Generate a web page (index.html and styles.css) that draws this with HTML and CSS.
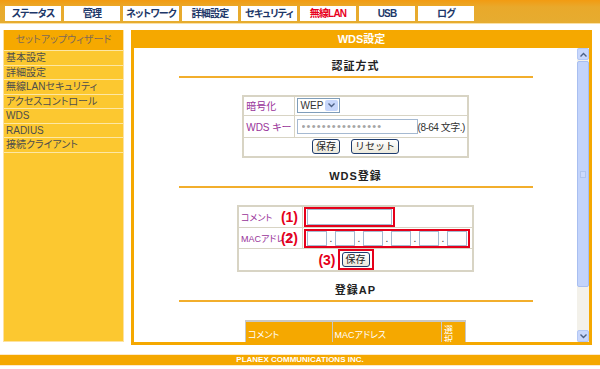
FILE: index.html
```html
<!DOCTYPE html>
<html lang="ja">
<head>
    <meta charset="UTF-8">
    <title>WDS設定</title>
    <link rel="stylesheet" href="styles.css">
</head>
<body>
    <div class="topbar">
        <ul class="tabs">
            <li>ステータス</li>
            <li>管理</li>
            <li>ネットワーク</li>
            <li>詳細設定</li>
            <li>セキュリティ</li>
            <li class="active">無線LAN</li>
            <li>USB</li>
            <li>ログ</li>
        </ul>
    </div>

    <div class="layout">
        <div class="sidebar">
            <div class="side-head">セットアップウィザード</div>
            <ul class="side-menu">
                <li>基本設定</li>
                <li>詳細設定</li>
                <li>無線LANセキュリティ</li>
                <li>アクセスコントロール</li>
                <li>WDS</li>
                <li>RADIUS</li>
                <li>接続クライアント</li>
                <li></li>
            </ul>
        </div>

        <div class="panel">
            <div class="panel-head">WDS設定</div>
            <div class="panel-body">
                <div class="content">
                    <!-- 認証方式 -->
                    <div class="sec-title">認証方式</div>
                    <div class="rule"></div>
                    <table class="form-table auth">
                        <tr class="r1">
                            <td class="label">暗号化</td>
                            <td>
                                <span class="select">
                                    <span>WEP</span>
                                    <span class="drop">
                                        <svg width="7" height="5" viewBox="0 0 7 5"><path d="M0.5 0.5 L3.5 3.5 L6.5 0.5" fill="none" stroke="#4d6185" stroke-width="1.4"/></svg>
                                    </span>
                                </span>
                            </td>
                        </tr>
                        <tr class="r2">
                            <td class="label">WDS キー</td>
                            <td><input class="field pass" type="text" value="••••••••••••••••"><span class="hint">(8-64 文字.)</span></td>
                        </tr>
                        <tr class="r3">
                            <td colspan="2" class="btns">
                                <button class="btn">保存</button>
                                <button class="btn">リセット</button>
                            </td>
                        </tr>
                    </table>

                    <!-- WDS登録 -->
                    <div class="sec-title">WDS登録</div>
                    <div class="rule"></div>
                    <table class="form-table reg">
                        <tr class="r1">
                            <td class="label">コメント<span class="note">(1)</span></td>
                            <td><span class="mark"><input class="field comment" type="text"></span></td>
                        </tr>
                        <tr class="r2">
                            <td class="label">MACアドレス<span class="note">(2)</span></td>
                            <td>
                                <span class="mark mac">
                                    <input class="field oct" type="text"><i>.</i>
                                    <input class="field oct" type="text"><i>.</i>
                                    <input class="field oct" type="text"><i>.</i>
                                    <input class="field oct" type="text"><i>.</i>
                                    <input class="field oct" type="text"><i>.</i>
                                    <input class="field oct" type="text">
                                </span>
                            </td>
                        </tr>
                        <tr class="r3">
                            <td colspan="2" class="btns">
                                <span class="mark save"><span class="note">(3)</span><button class="btn">保存</button></span>
                            </td>
                        </tr>
                    </table>

                    <!-- 登録AP -->
                    <div class="sec-title">登録AP</div>
                    <div class="rule"></div>
                    <table class="ap-table">
                        <tr>
                            <th class="c1">コメント</th>
                            <th class="c2">MACアドレス</th>
                            <th class="c3">選<br>択</th>
                        </tr>
                    </table>
                </div>

                <div class="scrollbar">
                    <div class="sb-btn">
                        <svg width="7" height="5" viewBox="0 0 7 5"><path d="M0.5 4.5 L3.5 1.5 L6.5 4.5" fill="none" stroke="#4d6185" stroke-width="1.4"/></svg>
                    </div>
                    <div class="sb-thumb"><span class="grip"></span></div>
                    <div class="sb-track"></div>
                    <div class="sb-btn">
                        <svg width="7" height="5" viewBox="0 0 7 5"><path d="M0.5 0.5 L3.5 3.5 L6.5 0.5" fill="none" stroke="#4d6185" stroke-width="1.4"/></svg>
                    </div>
                </div>
            </div>
        </div>
    </div>

    <div class="footer">PLANEX COMMUNICATIONS INC.</div>
</body>
</html>
```

FILE: styles.css
```css
* {
    box-sizing: border-box;
}
body {
    margin: 0;
    width: 600px;
    height: 369px;
    overflow: hidden;
    background: #fff;
    color: #333;
    font-family: "Liberation Sans", "Noto Sans CJK JP", sans-serif;
    font-size: 11px;
    font-feature-settings: "palt";
}

/* 上部タブ */
.topbar {
    height: 24px;
    background: linear-gradient(#f29b12, #e9a92b 7px, #e6ac30);
    border-bottom: 1px solid #fbe1a6;
}
.tabs {
    display: flex;
    gap: 3px;
    list-style: none;
    margin: 0;
    padding: 6px 0 0 5px;
}
.tabs li {
    width: 56px;
    height: 15px;
    background: #fff;
    color: #1d3768;
    font-size: 10px;
    font-weight: bold;
    letter-spacing: -0.8px;
    line-height: 15px;
    text-align: center;
}
.tabs li.active {
    color: #e8001c;
}

.layout {
    display: flex;
    gap: 7px;
    padding: 6px 0 0 3px;
}

/* 左メニュー */
.sidebar {
    width: 121px;
    height: 312px;
    background: #fcc830;
    border: 1px solid #fde2a0;
    border-top: 0;
}
.side-head {
    height: 20px;
    background: #f6a900;
    color: #7e6a58;
    font-size: 10px;
    line-height: 20px;
    text-align: center;
}
.side-menu {
    list-style: none;
    margin: 0;
    padding: 0;
}
.side-menu li {
    height: 14.5px;
    border-top: 1px solid #fde7a4;
    padding-left: 2px;
    font-size: 10px;
    line-height: 13px;
    color: #4d4d4d;
}

/* メインパネル */
.panel {
    width: 461px;
    height: 315px;
    background: #f5a800;
    padding: 0 3px 3px;
    display: flex;
    flex-direction: column;
}
.panel-head {
    height: 18px;
    line-height: 18px;
    color: #fff;
    font-weight: bold;
    text-align: center;
}
.panel-body {
    flex: 1;
    min-height: 0;
    display: flex;
    background: #fff;
}
.content {
    flex: 1;
    overflow: hidden;
}
.sec-title {
    margin-top: 10px;
    font-weight: bold;
    line-height: 16px;
    letter-spacing: 1px;
    text-align: center;
    color: #222;
}
.rule {
    width: 354px;
    height: 2px;
    margin: 2px auto 0;
    background: #f2ae2c;
}

.form-table {
    border-collapse: collapse;
    margin: 17px auto 0;
    border: 2px solid #d8d4c4;
}
.form-table td {
    border: 1px solid #d8d4c4;
    padding: 0 2px;
    white-space: nowrap;
}
.form-table .label {
    color: #993399;
}
.auth {
    width: 223px;
}
.auth .label {
    width: 50px;
    font-size: 10px;
}
.auth .r1 td { height: 19px; }
.auth .r2 td { height: 22px; }
.auth .r3 td { height: 20px; }

.select {
    display: inline-flex;
    align-items: center;
    justify-content: space-between;
    width: 43px;
    height: 15px;
    padding: 0 1px 0 3px;
    border: 1px solid #7f9db9;
    font-size: 10px;
    vertical-align: middle;
}
.drop {
    width: 13px;
    height: 11px;
    display: flex;
    align-items: center;
    justify-content: center;
    background: #c6d6fb;
    border-radius: 2px;
}
.field {
    height: 15px;
    padding: 0 2px;
    border: 1px solid #a5b9d1;
    font-family: inherit;
    font-size: 11px;
    vertical-align: middle;
}
.pass {
    width: 121px;
    padding-left: 4px;
    color: #a5a5a5;
    font-size: 11px;
    letter-spacing: 1.2px;
}
.hint {
    font-size: 10px;
    letter-spacing: -0.5px;
    vertical-align: middle;
}
.btns {
    text-align: center;
}
.btn {
    height: 15px;
    padding: 0 3px;
    margin: 0 4px;
    border: 1px solid #1e3c6e;
    border-radius: 3px;
    background: linear-gradient(#fff, #ece9dc);
    font-family: inherit;
    font-size: 10px;
    line-height: 12px;
    color: #222;
    vertical-align: middle;
}

/* WDS登録 */
.reg {
    width: 237px;
}
.reg .label {
    width: 69px;
    position: relative;
    font-size: 9px;
}
.reg .r1 td { height: 21px; }
.reg .r2 td { height: 21px; }
.reg .r3 td { height: 20px; }
.reg td + td {
    padding-left: 1px;
}
.note {
    position: absolute;
    right: 4px;
    top: 50%;
    transform: translateY(-52%);
    color: #e5001a;
    font-size: 14px;
    font-weight: bold;
}
.mark {
    display: inline-flex;
    align-items: center;
    border: 2px solid #e5001a;
    padding: 0 1px;
    vertical-align: middle;
}
.comment {
    width: 85px;
    height: 16px;
}
.mac {
    width: 166px;
    justify-content: space-between;
}
.oct {
    width: 20px;
}
.mac i {
    font-style: normal;
    font-size: 10px;
}
.save {
    position: relative;
    padding: 1px 2px;
}
.save .btn {
    margin: 0;
}
.save .note {
    right: calc(100% + 4px);
}

/* 登録AP */
.ap-table {
    border-collapse: collapse;
    width: 221px;
    margin: 18px auto 0;
    border-top: 2px solid #c8c8c8;
}
.ap-table th {
    height: 26px;
    padding: 2px 2px 0;
    background: #f5a800;
    border: 1px solid #c8c8c8;
    color: #fff;
    font-size: 9px;
    font-weight: normal;
    text-align: left;
    line-height: 10px;
}
.ap-table .c1 { width: 87px; }
.ap-table .c2 { width: 110px; }
.ap-table .c3 { width: 24px; }

/* スクロールバー */
.scrollbar {
    width: 12px;
    display: flex;
    flex-direction: column;
    background: #f3f1ea;
}
.sb-btn {
    height: 12px;
    display: flex;
    align-items: center;
    justify-content: center;
    background: #c8d7fc;
    border: 1px solid #b3c7f4;
    border-radius: 2px;
}
.sb-thumb {
    height: 226px;
    margin-top: 1px;
    display: flex;
    align-items: center;
    justify-content: center;
    background: #c3d4fb;
    border: 1px solid #a8bef0;
    border-radius: 2px;
}
.grip {
    width: 6px;
    height: 7px;
    border: 1px solid #b0c4ee;
    background: #ccdafc;
}
.sb-track {
    flex: 1;
}

.footer {
    margin-top: 9px;
    height: 12px;
    background: #f5a800;
    border-top: 1px solid #fdeacb;
    border-bottom: 1px solid #fdeacb;
    color: #fff;
    font-size: 8px;
    font-weight: bold;
    line-height: 10px;
    text-align: center;
}
```
